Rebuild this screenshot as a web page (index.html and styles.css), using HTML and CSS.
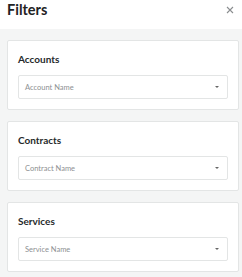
FILE: index.html
```html
<!DOCTYPE html>
<html lang="en">
<head>
  <meta charset="UTF-8">
  <meta name="viewport" content="width=device-width, initial-scale=1.0">
  <title>Filters</title>
  <link rel="stylesheet" href="styles.css">
</head>
<body>
  <div class="panel">
    <div class="panel-header">
      <h1 class="panel-title">Filters</h1>
      <button class="close-btn" aria-label="Close">
        <svg width="8" height="8" viewBox="0 0 8 8">
          <path d="M1 1 L7 7 M7 1 L1 7" stroke="#8a8d8f" stroke-width="1.1" fill="none"/>
        </svg>
      </button>
    </div>
    <div class="panel-body">
      <div class="filter-card">
        <div class="filter-label">Accounts</div>
        <div class="select">
          <span class="select-placeholder">Account Name</span>
          <span class="caret"></span>
        </div>
      </div>
      <div class="filter-card">
        <div class="filter-label">Contracts</div>
        <div class="select">
          <span class="select-placeholder">Contract Name</span>
          <span class="caret"></span>
        </div>
      </div>
      <div class="filter-card">
        <div class="filter-label">Services</div>
        <div class="select">
          <span class="select-placeholder">Service Name</span>
          <span class="caret"></span>
        </div>
      </div>
    </div>
  </div>
</body>
</html>
```

FILE: styles.css
```css
body {
  font-family: 'Lato', 'Liberation Sans', sans-serif;
  margin: 0;
  padding: 0;
  background: #f4f5f5;
  color: #222;
}

.panel {
  width: 242px;
  height: 277px;
  overflow: hidden;
}

.panel-header {
  background: #fff;
  height: 29px;
  display: flex;
  align-items: center;
  justify-content: space-between;
  padding: 0 8px 0 7px;
  box-sizing: border-box;
}

.panel-title {
  margin: 0;
  font-size: 14.5px;
  font-weight: 700;
  line-height: 20px;
  margin-top: -9px;
  color: #1f2324;
}

.close-btn {
  border: none;
  background: none;
  padding: 0;
  width: 8px;
  height: 8px;
  margin-top: -9px;
  display: flex;
  cursor: pointer;
}

.panel-body {
  padding: 11px 3px 0 7px;
  display: flex;
  flex-direction: column;
  gap: 11px;
}

.filter-card {
  background: #fff;
  border: 1px solid #e3e5e5;
  border-radius: 2px;
  padding: 12px 10px 10px;
  display: flex;
  flex-direction: column;
  gap: 10px;
}

.filter-label {
  font-size: 10px;
  font-weight: 700;
  line-height: 12px;
  color: #262a2b;
}

.select {
  height: 24px;
  box-sizing: border-box;
  border: 1px solid #e3e5e5;
  border-radius: 2px;
  display: flex;
  align-items: center;
  justify-content: space-between;
  padding: 0 8px 0 6px;
}

.select-placeholder {
  font-size: 7.5px;
  color: #8d9092;
}

.caret {
  width: 0;
  height: 0;
  border-left: 2.5px solid transparent;
  border-right: 2.5px solid transparent;
  border-top: 2.5px solid #666;
}
```
